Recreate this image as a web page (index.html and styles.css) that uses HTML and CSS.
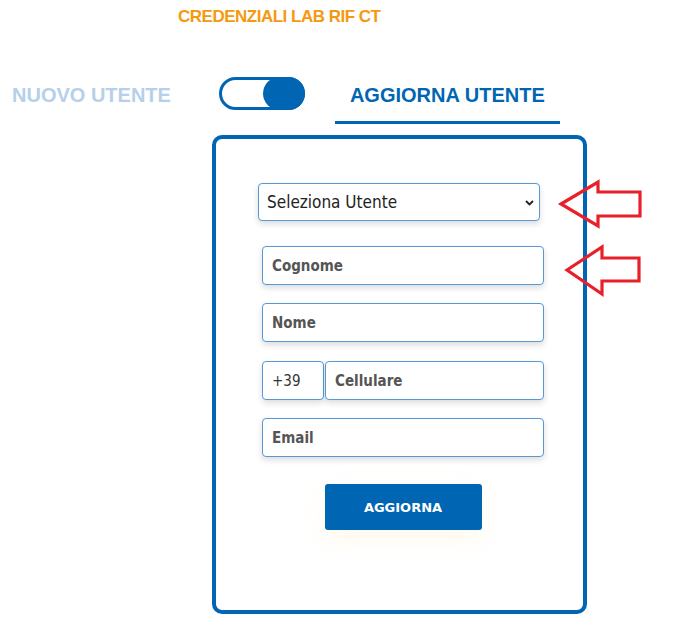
FILE: index.html
```html
<!DOCTYPE html>
<html lang="it">
<head>
<meta charset="utf-8">
<title>Credenziali Lab Rif CT</title>
<link rel="stylesheet" href="styles.css">
</head>
<body>
<div class="page">
  <h1 class="title">CREDENZIALI LAB RIF CT</h1>
  <div class="tabs">
    <div class="tab tab-off">NUOVO UTENTE</div>
    <div class="toggle"><span class="knob"></span></div>
    <div class="tab tab-on">AGGIORNA UTENTE</div>
  </div>
  <div class="card">
    <div class="form">
      <div class="select-wrap">
        <select class="select"><option>Seleziona Utente</option></select>
        <svg class="chevron" width="9" height="6" viewBox="0 0 9 6"><path d="M1 1 L4.5 4.5 L8 1" fill="none" stroke="#222" stroke-width="1.8"/></svg>
      </div>
      <input class="field" type="text" placeholder="Cognome">
      <input class="field" type="text" placeholder="Nome">
      <div class="phone">
        <input class="field prefix" type="text" value="+39">
        <input class="field cell" type="text" placeholder="Cellulare">
      </div>
      <input class="field" type="text" placeholder="Email">
      <button class="btn">AGGIORNA</button>
    </div>
  </div>
  <svg class="arrows" width="100" height="130" viewBox="550 175 100 130">
    <polygon points="561,204 598,182 598,192 640,192 640,216 598,216 598,226" fill="none" stroke="#e8202a" stroke-width="3.2" stroke-linejoin="miter"/>
    <polygon points="567,270 602,247 602,258 639,258 639,281 602,281 602,294" fill="none" stroke="#e8202a" stroke-width="3.2" stroke-linejoin="miter"/>
  </svg>
</div>
</body>
</html>
```
FILE: styles.css
```css
* { box-sizing: border-box; }
html, body { margin: 0; padding: 0; background: #fff; }
.page {
  position: relative;
  width: 680px;
  height: 635px;
  font-family: "Liberation Sans", Arial, sans-serif;
}
.title {
  margin: 0;
  padding: 7px 0 0 178px;
  font-size: 17px;
  line-height: 20px;
  font-weight: bold;
  letter-spacing: -0.5px;
  color: #f5990f;
}
.tabs {
  display: flex;
  align-items: center;
  margin-top: 36px;
}
.tab {
  font-size: 20px;
  line-height: 23px;
  font-weight: bold;
  padding: 21px 15px 14px;
  border-bottom: 3px solid transparent;
}
.tab-off {
  color: #b5d0ea;
  margin-left: -3px;
}
.tab-on {
  color: #0066b3;
  border-bottom-color: #0066b3;
  margin-left: 30px;
}
.toggle {
  display: flex;
  justify-content: flex-end;
  width: 86px;
  height: 33px;
  margin-left: 33px;
  border: 3px solid #0066b3;
  border-radius: 17px;
  background: #fff;
}
.knob {
  width: 42px;
  height: 33px;
  margin: -3px -3px 0 0;
  border-radius: 17px;
  background: #0066b3;
}
.card {
  margin: 11px 0 0 212px;
  width: 375px;
  height: 479px;
  border: 4px solid #0066b3;
  border-radius: 10px;
  padding: 44px 0 0 46px;
}
.form {
  display: flex;
  flex-direction: column;
  align-items: flex-start;
  width: 282px;
}
.select-wrap {
  position: relative;
  margin-left: -4px;
}
.select {
  -webkit-appearance: none;
  appearance: none;
  display: block;
  width: 282px;
  height: 38px;
  margin: 0;
  padding: 0 0 0 8px;
  border: 1px solid #5599d6;
  border-radius: 4px;
  background: #fff;
  box-shadow: 0 3px 6px rgba(0, 0, 0, 0.14);
  font-family: "DejaVu Sans Condensed", "DejaVu Sans", sans-serif;
  font-stretch: condensed;
  font-size: 17px;
  color: #222;
}
.chevron {
  position: absolute;
  right: 6px;
  top: 17px;
}
.field {
  display: block;
  width: 282px;
  height: 39px;
  margin: 0;
  padding: 0 0 0 9px;
  border: 1px solid #5599d6;
  border-radius: 4px;
  background: #fff;
  box-shadow: 0 3px 6px rgba(0, 0, 0, 0.14);
  font-family: "DejaVu Sans Condensed", "DejaVu Sans", sans-serif;
  font-stretch: condensed;
  font-size: 15px;
  color: #333;
  outline: none;
}
.field::placeholder {
  color: #555;
  font-weight: bold;
}
.select-wrap + .field { margin-top: 25px; }
.form > .field + .field,
.form > .phone + .field { margin-top: 18px; }
.form > .phone { margin-top: 19px; }
.phone {
  display: flex;
  gap: 1px;
  width: 282px;
}
.prefix {
  width: 62px;
  color: #333;
}
.cell {
  width: 219px;
}
.btn {
  align-self: center;
  margin-top: 27px;
  width: 157px;
  height: 46px;
  border: none;
  border-radius: 3px;
  background: #0066b3;
  color: #fff;
  font-family: "DejaVu Sans", sans-serif;
  font-weight: bold;
  font-size: 13px;
  box-shadow: 0 8px 24px rgba(255, 200, 60, 0.10);
}
.arrows {
  position: absolute;
  left: 550px;
  top: 175px;
}
```
